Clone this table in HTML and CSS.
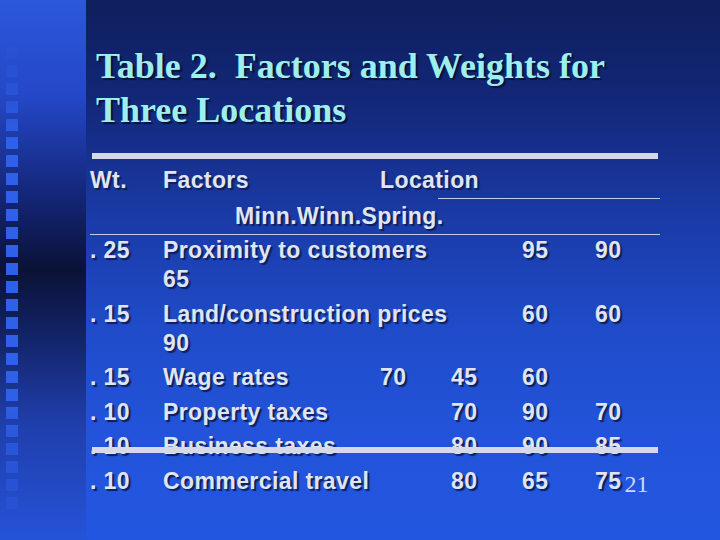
FILE: index.html
```html
<!DOCTYPE html>
<html lang="en">
<head>
<meta charset="utf-8">
<title>Table 2. Factors and Weights for Three Locations</title>
<link rel="stylesheet" href="styles.css">
</head>
<body>
<div class="slide">
  <aside class="strip">
    <div class="squares">
      <span></span><span></span><span></span><span></span><span></span><span></span>
      <span></span><span></span><span></span><span></span><span></span><span></span>
      <span></span><span></span><span></span><span></span><span></span><span></span>
      <span></span><span></span><span></span><span></span><span></span><span></span>
      <span></span><span></span>
    </div>
  </aside>
  <main class="main">
    <h1 class="title">Table 2.&nbsp; Factors and Weights for<br>Three Locations</h1>
    <div class="rule"></div>
    <div class="table">
      <div class="row head">
        <span class="c1">Wt.</span>
        <span class="c2">Factors</span>
        <span class="c3">Location</span>
      </div>
      <div class="thin partial"></div>
      <div class="sub">Minn.Winn.Spring.</div>
      <div class="thin full"></div>
      <div class="row">
        <span class="c1">. 25</span>
        <span class="c2 span3">Proximity to customers</span>
        <span class="c5">95</span>
        <span class="c6">90</span>
        <span class="c2 wrap">65</span>
      </div>
      <div class="row">
        <span class="c1">. 15</span>
        <span class="c2 span3">Land/construction prices</span>
        <span class="c5">60</span>
        <span class="c6">60</span>
        <span class="c2 wrap">90</span>
      </div>
      <div class="row">
        <span class="c1">. 15</span>
        <span class="c2">Wage rates</span>
        <span class="c3">70</span>
        <span class="c4">45</span>
        <span class="c5">60</span>
      </div>
      <div class="row">
        <span class="c1">. 10</span>
        <span class="c2">Property taxes</span>
        <span class="c4">70</span>
        <span class="c5">90</span>
        <span class="c6">70</span>
      </div>
      <div class="row">
        <span class="c1">. 10</span>
        <span class="c2">Business taxes</span>
        <span class="c4">80</span>
        <span class="c5">90</span>
        <span class="c6">85</span>
      </div>
      <div class="row">
        <span class="c1">. 10</span>
        <span class="c2">Commercial travel</span>
        <span class="c4">80</span>
        <span class="c5">65</span>
        <span class="c6">75<span class="pageno">21</span></span>
      </div>
      <div class="rule overlay"></div>
    </div>
  </main>
</div>
</body>
</html>
```

FILE: styles.css
```css
html, body {
  margin: 0;
  padding: 0;
}

body {
  width: 720px;
  height: 540px;
  overflow: hidden;
  background: #2356e0;
}

.slide {
  display: flex;
  width: 720px;
  height: 540px;
}

.strip {
  width: 86px;
  flex: none;
  background: linear-gradient(to bottom,
    #2b58dc 0%,
    #2447c6 18%,
    #142679 36%,
    #0a1236 50%,
    #13266f 64%,
    #1f3eaa 78%,
    #2553d8 100%);
}

.squares {
  display: flex;
  flex-direction: column;
  gap: 6px;
  padding: 47px 0 0 6px;
  -webkit-mask-image: linear-gradient(to bottom, rgba(0,0,0,0.15) 0, rgba(0,0,0,0.15) 60px, #000 140px, #000 400px, rgba(0,0,0,0.2) 520px);
  mask-image: linear-gradient(to bottom, rgba(0,0,0,0.15) 0, rgba(0,0,0,0.15) 60px, #000 140px, #000 400px, rgba(0,0,0,0.2) 520px);
}

.squares span {
  display: block;
  width: 12px;
  height: 12px;
  background: #2f60ea;
}

.main {
  flex: 1;
  padding: 0 0 0 4px;
  background: linear-gradient(to bottom,
    #0e1f5c 0%,
    #122777 18%,
    #1a3aa6 40%,
    #1f4bc8 60%,
    #2253da 80%,
    #2356e0 100%);
}

.title {
  margin: 44px 0 0 6px;
  font-family: "Liberation Serif", "Times New Roman", serif;
  font-weight: bold;
  font-size: 36px;
  line-height: 44px;
  color: #9eeeee;
  text-shadow: 2px 2px 1px #08123a;
}

.rule {
  margin: 21px 0 0 2px;
  width: 566px;
  height: 6px;
  background: #d6dae8;
}

.table {
  position: relative;
  margin-top: 7px;
  font-family: "Liberation Sans", Arial, sans-serif;
  font-weight: bold;
  font-size: 23px;
  letter-spacing: 0.4px;
  line-height: 29px;
  color: #dfe5f3;
  text-shadow: 2px 2px 1px #0f1f5a;
}

.row {
  display: grid;
  grid-template-columns: 73px 217px 71px 71px 73px 80px;
  margin-bottom: 5.5px;
}

.row.head {
  margin-bottom: 3px;
}

.c1 { grid-column: 1; }
.c2 { grid-column: 2; white-space: nowrap; }
.c3 { grid-column: 3; }
.c4 { grid-column: 4; }
.c5 { grid-column: 5; }
.c6 { grid-column: 6; white-space: nowrap; }
.span3 { grid-column: 2 / span 3; }
.wrap { grid-row: 2; }

.thin {
  height: 1px;
  background: #c4cde8;
}

.thin.partial {
  margin-left: 348px;
  width: 222px;
}

.thin.full {
  width: 570px;
  margin-bottom: 1px;
}

.sub {
  padding-left: 145px;
  margin: 3px 0 3px;
}

.pageno {
  margin-left: 3px;
  font-family: "Liberation Serif", "Times New Roman", serif;
  font-weight: normal;
  font-size: 24px;
  letter-spacing: 0;
  color: #c9d9f2;
  text-shadow: none;
  vertical-align: -3px;
}

.rule.overlay {
  position: absolute;
  left: 0;
  top: 281px;
  margin: 0 0 0 2px;
}
```
